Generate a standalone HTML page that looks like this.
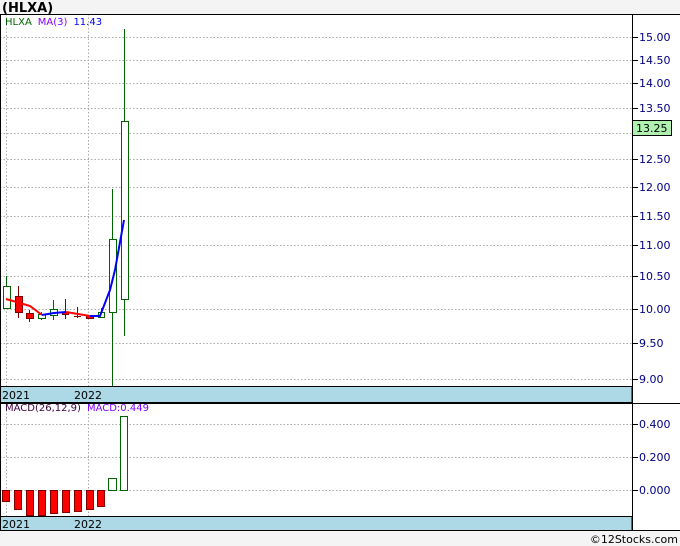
<!DOCTYPE html>
<html><head><meta charset="utf-8"><style>
html,body{margin:0;padding:0;background:#f4f4f4;}
svg{display:block;font-family:"DejaVu Sans","Liberation Sans",sans-serif;}
</style></head><body>
<svg width="680" height="546" viewBox="0 0 680 546" xmlns="http://www.w3.org/2000/svg">
<rect x="0" y="0" width="680" height="546" fill="#f4f4f4"/>
<text x="2" y="12" font-size="13" font-weight="bold" fill="#000">(HLXA)</text>
<!-- main panel -->
<rect x="0" y="14" width="680" height="517" fill="#fff"/>
<g stroke="#aaa" stroke-dasharray="1.5,2" stroke-width="1">
<line x1="0" y1="37.5" x2="632" y2="37.5"/><line x1="0" y1="60.5" x2="632" y2="60.5"/>
<line x1="0" y1="83.5" x2="632" y2="83.5"/><line x1="0" y1="108.5" x2="632" y2="108.5"/>
<line x1="0" y1="133.5" x2="632" y2="133.5"/><line x1="0" y1="159.5" x2="632" y2="159.5"/>
<line x1="0" y1="187.5" x2="632" y2="187.5"/><line x1="0" y1="216.5" x2="632" y2="216.5"/>
<line x1="0" y1="245.5" x2="632" y2="245.5"/><line x1="0" y1="276.5" x2="632" y2="276.5"/>
<line x1="0" y1="309.5" x2="632" y2="309.5"/><line x1="0" y1="343.5" x2="632" y2="343.5"/>
<line x1="0" y1="379.5" x2="632" y2="379.5"/>
<line x1="88.5" y1="14" x2="88.5" y2="386"/><line x1="6.5" y1="14" x2="6.5" y2="386"/>
<line x1="0" y1="424.5" x2="632" y2="424.5"/><line x1="0" y1="457.5" x2="632" y2="457.5"/>
<line x1="0" y1="490.5" x2="632" y2="490.5"/>
<line x1="88.5" y1="403" x2="88.5" y2="516"/><line x1="6.5" y1="403" x2="6.5" y2="516"/>
</g>
<!-- candles -->
<g stroke-width="1">
<line x1="6.5" y1="276" x2="6.5" y2="309" stroke="#006400"/><rect x="3.5" y="286.5" width="7" height="22" fill="#fff" stroke="#006400"/>
<line x1="18.5" y1="286" x2="18.5" y2="318" stroke="#800000"/><rect x="15.5" y="296.5" width="7" height="16" fill="#f00" stroke="#800000"/>
<line x1="29.5" y1="310" x2="29.5" y2="322" stroke="#800000"/><rect x="26.5" y="313.5" width="7" height="5" fill="#f00" stroke="#800000"/>
<line x1="41.5" y1="312" x2="41.5" y2="320" stroke="#006400"/><rect x="38.5" y="314.5" width="7" height="4" fill="#fff" stroke="#006400"/>
<line x1="53.5" y1="300" x2="53.5" y2="320" stroke="#006400"/><rect x="50.5" y="309.5" width="7" height="6" fill="#fff" stroke="#006400"/>
<line x1="65.5" y1="299" x2="65.5" y2="319" stroke="#800000"/><rect x="62.5" y="312.5" width="6" height="2" fill="#f00" stroke="#800000"/>
<line x1="77.5" y1="307" x2="77.5" y2="318" stroke="#800000"/><line x1="74" y1="316.5" x2="81" y2="316.5" stroke="#800000"/>
<rect x="86.5" y="315.5" width="7" height="3" fill="#f00" stroke="#800000"/>
<line x1="101.5" y1="308" x2="101.5" y2="318" stroke="#006400"/><rect x="98.5" y="312.5" width="6" height="5" fill="#fff" stroke="#006400"/>
<line x1="112.5" y1="189" x2="112.5" y2="386" stroke="#006400"/><rect x="109.5" y="239.5" width="7" height="73" fill="#fff" stroke="#006400"/>
<line x1="124.5" y1="29" x2="124.5" y2="336" stroke="#006400"/><rect x="121.5" y="121.5" width="7" height="178" fill="#fff" stroke="#006400"/>
</g>
<polyline points="6,299 20,303 30,306 42,315" fill="none" stroke="#f00" stroke-width="2"/>
<polyline points="42,315 54,313 66,312" fill="none" stroke="#00f" stroke-width="2"/>
<polyline points="66,312 78,314 90,316" fill="none" stroke="#f00" stroke-width="2"/>
<polyline points="90,316 100,316 110,290 115,270 124,220" fill="none" stroke="#00f" stroke-width="2"/>
<text x="5" y="25" font-size="10"><tspan fill="#006400">HLXA</tspan><tspan fill="#8000ff" dx="6">MA(3)</tspan><tspan fill="#00f" dx="6">11.43</tspan></text>
<!-- date strip -->
<rect x="0" y="386.5" width="632" height="16" fill="#add8e6" stroke="#000"/>
<text x="2" y="399" font-size="11" fill="#000">2021</text><text x="74" y="399" font-size="11" fill="#000">2022</text>
<!-- MACD -->
<g stroke="#800000" fill="#f00">
<rect x="2.5" y="490.5" width="7" height="11"/><rect x="14.5" y="490.5" width="7" height="19"/>
<rect x="26.5" y="490.5" width="7" height="25"/><rect x="38.5" y="490.5" width="7" height="25"/>
<rect x="50.5" y="490.5" width="7" height="23"/><rect x="62.5" y="490.5" width="7" height="22"/>
<rect x="74.5" y="490.5" width="7" height="21"/><rect x="86.5" y="490.5" width="7" height="19"/>
<rect x="97.5" y="490.5" width="7" height="16"/>
</g>
<rect x="108.5" y="478.5" width="8" height="12" fill="#fff" stroke="#006400"/>
<rect x="120.5" y="416.5" width="7" height="74" fill="#fff" stroke="#006400"/>
<text x="5" y="411" font-size="10"><tspan fill="#400040">MACD(26,12,9)</tspan><tspan fill="#8000ff" dx="6">MACD:0.449</tspan></text>
<rect x="0" y="516.5" width="632" height="14" fill="#add8e6" stroke="#000"/>
<text x="2" y="528" font-size="11" fill="#000">2021</text><text x="74" y="528" font-size="11" fill="#000">2022</text>
<line x1="0" y1="403.5" x2="680" y2="403.5" stroke="#000"/>
<line x1="0" y1="14.5" x2="680" y2="14.5" stroke="#000"/>
<line x1="0" y1="530.5" x2="680" y2="530.5" stroke="#000"/>
<line x1="632.5" y1="14" x2="632.5" y2="531" stroke="#000"/>
<line x1="0.5" y1="14" x2="0.5" y2="531" stroke="#000"/>
<!-- axis -->
<g stroke="#000">
<line x1="632" y1="37.5" x2="638" y2="37.5"/><line x1="632" y1="60.5" x2="638" y2="60.5"/><line x1="632" y1="83.5" x2="638" y2="83.5"/><line x1="632" y1="108.5" x2="638" y2="108.5"/><line x1="632" y1="159.5" x2="638" y2="159.5"/><line x1="632" y1="187.5" x2="638" y2="187.5"/><line x1="632" y1="216.5" x2="638" y2="216.5"/><line x1="632" y1="245.5" x2="638" y2="245.5"/><line x1="632" y1="276.5" x2="638" y2="276.5"/><line x1="632" y1="309.5" x2="638" y2="309.5"/><line x1="632" y1="343.5" x2="638" y2="343.5"/><line x1="632" y1="379.5" x2="638" y2="379.5"/>
<line x1="632" y1="424.5" x2="638" y2="424.5"/><line x1="632" y1="457.5" x2="638" y2="457.5"/><line x1="632" y1="490.5" x2="638" y2="490.5"/>
</g>
<g font-size="11" fill="#000080">
<text x="639" y="41">15.00</text><text x="639" y="64">14.50</text><text x="639" y="87">14.00</text><text x="639" y="112">13.50</text>
<text x="639" y="163">12.50</text><text x="639" y="191">12.00</text><text x="639" y="220">11.50</text><text x="639" y="249">11.00</text>
<text x="639" y="280">10.50</text><text x="639" y="313">10.00</text><text x="639" y="347">9.50</text><text x="639" y="383">9.00</text>
<text x="639" y="428">0.400</text><text x="639" y="461">0.200</text><text x="639" y="494">0.000</text>
</g>
<rect x="632.5" y="120.5" width="39" height="15" fill="#b0f0b0" stroke="#000"/>
<text x="636" y="132" font-size="11" fill="#000">13.25</text>
<text x="678" y="543" font-size="11" fill="#000" text-anchor="end">©12Stocks.com</text>
</svg>
</body></html>
